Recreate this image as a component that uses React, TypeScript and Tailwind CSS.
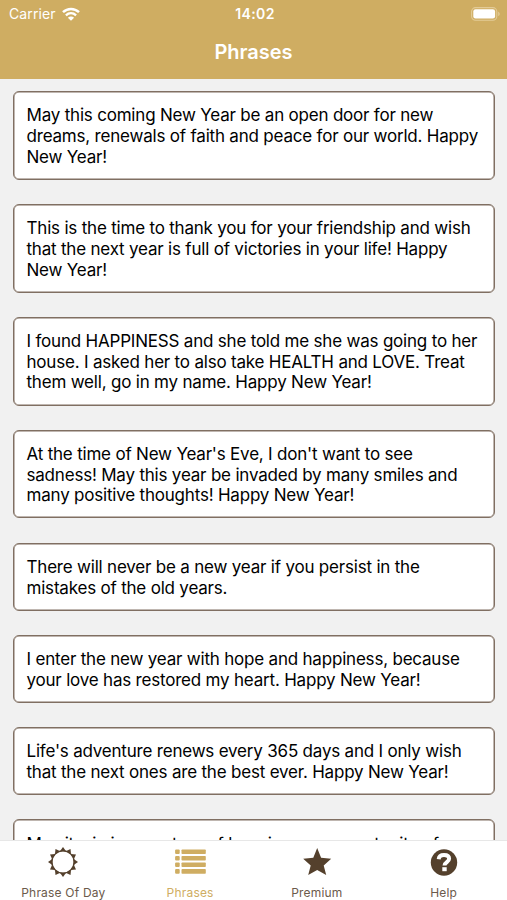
import React from "react";

type Phrase = { lines: string[] };

const phrases: Phrase[] = [
  { lines: ["May this coming New Year be an open door for new", "dreams, renewals of faith and peace for our world. Happy", "New Year!"] },
  { lines: ["This is the time to thank you for your friendship and wish", "that the next year is full of victories in your life! Happy", "New Year!"] },
  { lines: ["I found HAPPINESS and she told me she was going to her", "house. I asked her to also take HEALTH and LOVE. Treat", "them well, go in my name. Happy New Year!"] },
  { lines: ["At the time of New Year's Eve, I don't want to see", "sadness! May this year be invaded by many smiles and", "many positive thoughts! Happy New Year!"] },
  { lines: ["There will never be a new year if you persist in the", "mistakes of the old years."] },
  { lines: ["I enter the new year with hope and happiness, because", "your love has restored my heart. Happy New Year!"] },
  { lines: ["Life's adventure renews every 365 days and I only wish", "that the next ones are the best ever. Happy New Year!"] },
  { lines: ["May it win in a century of happiness a opportunity of"] },
];

function WifiIcon() {
  return (
    <svg className="h-[14px] w-[18px]" viewBox="0 0 18 14" fill="none" stroke="white">
      <path d="M1 5.2C5.6.8 12.4.8 17 5.2" strokeWidth="2.5" />
      <path d="M3.9 8.3c3-2.8 7.2-2.8 10.2 0" strokeWidth="2.3" />
      <path d="M9 13.8 5.9 10.7c1.8-1.6 4.4-1.6 6.2 0Z" fill="white" stroke="none" />
    </svg>
  );
}

function BatteryIcon() {
  return (
    <svg className="h-[14px] w-[30px]" viewBox="0 0 30 14">
      <rect x=".6" y=".6" width="25.2" height="12.6" rx="4" fill="none" stroke="#e3cb97" strokeWidth="1.1" />
      <rect x="2.3" y="2.3" width="21.8" height="9.2" rx="2.2" fill="white" />
      <path d="M27.2 4.7c2 .7 2 3.7 0 4.4Z" fill="#e3cb97" />
    </svg>
  );
}

function SunIcon() {
  const rays = Array.from({ length: 12 }, (_, i) => i * 30);
  return (
    <svg className="h-[30px] w-[30px]" viewBox="-15 -15 30 30">
      <circle r="11.1" fill="none" stroke="#54402c" strokeWidth="1.3" />
      {rays.map((a) => (
        <path key={a} d="M-3.1-10.7 0-15 3.1-10.7Z" fill="#54402c" transform={`rotate(${a})`} />
      ))}
    </svg>
  );
}

function ListIcon() {
  return (
    <svg className="h-[30px] w-[32px]" viewBox="0 0 32 30" fill="#cfad62">
      {[2.4, 9, 15.5, 22.1].map((y) => (
        <g key={y}>
          <rect x="1.1" y={y} width="4.6" height="4.6" rx="1" />
          <rect x="7.5" y={y} width="24.3" height="4.6" rx=".8" />
        </g>
      ))}
    </svg>
  );
}

function StarIcon() {
  return (
    <svg className="h-[30px] w-[30px]" viewBox="0 0 30 30">
      <path d="m15.2 .9 3.9 9.9 10.1.9-7.5 6.7 2.5 9.7-9-5.2-9 5.2 2.5-9.7-7.5-6.7 10.1-.9Z" fill="#54402c" />
    </svg>
  );
}

function HelpIcon() {
  return (
    <svg className="h-[30px] w-[30px]" viewBox="0 0 30 30">
      <circle cx="15" cy="15.5" r="13.2" fill="#54402c" />
      <path d="M9.7 12.2c.3-2.8 2.4-4.2 5.3-4.2 3.2 0 5.1 1.4 5.1 3.8 0 3.4-4.6 3.2-4.6 6.8" fill="none" stroke="white" strokeWidth="4" />
      <rect x="13.3" y="20.2" width="4.4" height="4" fill="white" />
    </svg>
  );
}

const tabs = [
  { label: "Phrase Of Day", icon: <SunIcon />, active: false },
  { label: "Phrases", icon: <ListIcon />, active: true },
  { label: "Premium", icon: <StarIcon />, active: false },
  { label: "Help", icon: <HelpIcon />, active: false },
];

export default function App() {
  return (
    <div className="flex h-[900px] w-[507px] flex-col overflow-hidden bg-[#f1f1f1] font-['Inter',sans-serif]">
      <header className="h-[79px] shrink-0 bg-[#cfad62] text-white">
        <div className="grid h-[27px] grid-cols-3 items-center pr-[6px] pl-[9px] text-[14px]">
          <div className="flex items-center gap-[6px]">
            <span className="tracking-[0.1px]">Carrier</span>
            <WifiIcon />
          </div>
          <span className="text-center font-semibold tracking-[0.4px]">14:02</span>
          <div className="flex justify-end"><BatteryIcon /></div>
        </div>
        <h1 className="text-center text-[20px] leading-[51px] font-semibold">Phrases</h1>
      </header>
      <main className="flex min-h-0 flex-1 flex-col gap-[24.2px] overflow-hidden px-[12.5px] pt-[12.2px]">
        {phrases.map((p) => (
          <article key={p.lines[0]} className="shrink-0 rounded-[6px] border border-[#806f62] bg-white px-[13px] pt-[13.3px] pb-[11.6px] text-[17px] leading-[20.6px] tracking-[-0.2px] text-black shadow-[inset_0_0_0_0.5px_#806f62]">
            {p.lines.map((line) => (
              <p key={line} className="whitespace-nowrap">{line}</p>
            ))}
          </article>
        ))}
      </main>
      <nav className="grid h-[60px] shrink-0 grid-cols-4 border-t border-[#e7e7e7] bg-white">
        {tabs.map((t) => (
          <div key={t.label} className={`flex flex-col items-center pt-[6px] ${t.active ? "text-[#cfad62]" : "text-[#6b5a4b]"}`}>
            {t.icon}
            <span className="mt-[8px] text-[12px] leading-[15px] tracking-[0.2px]">{t.label}</span>
          </div>
        ))}
      </nav>
    </div>
  );
}
